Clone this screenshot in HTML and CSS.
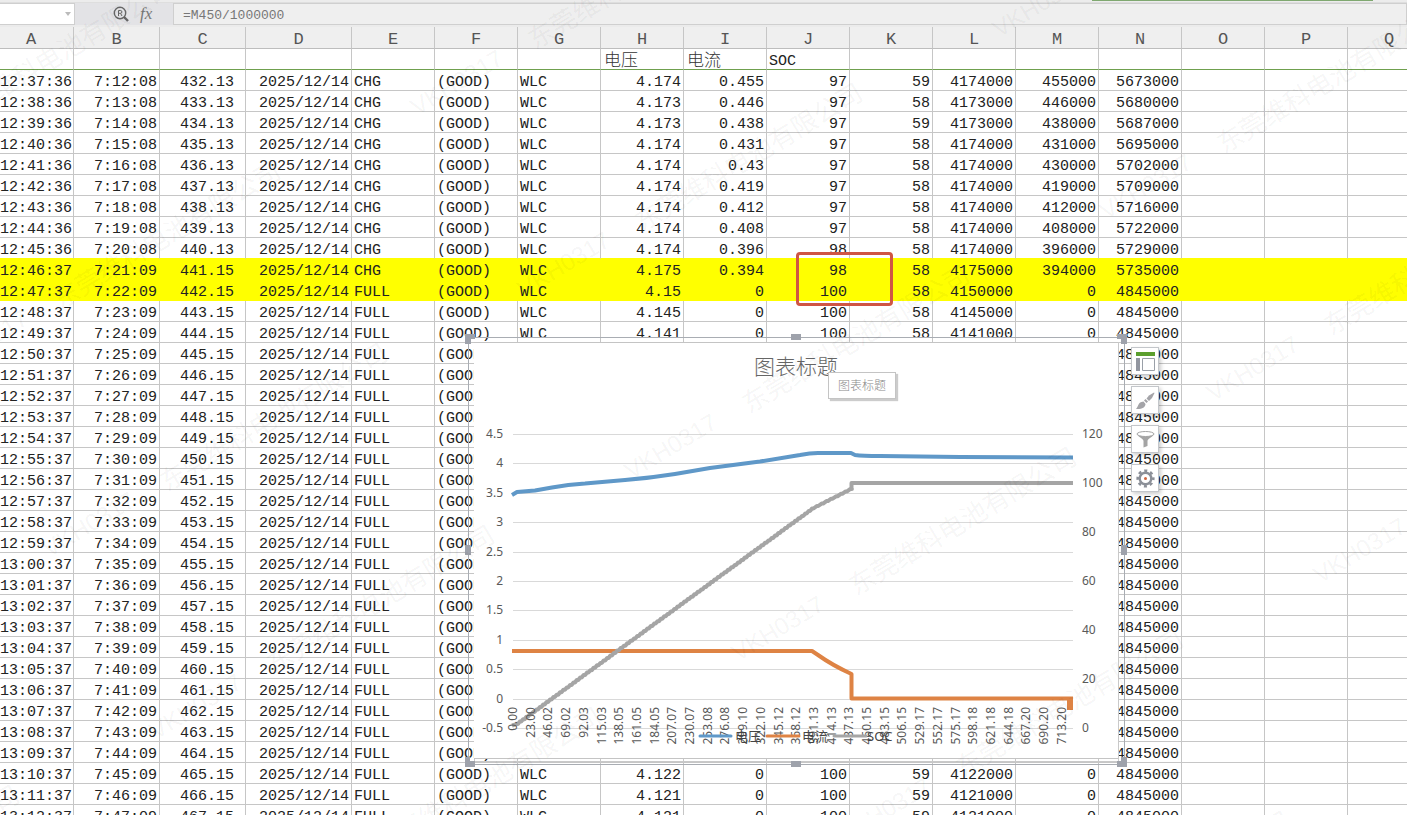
FILE: index.html
```
<!DOCTYPE html>
<html lang="zh-CN">
<head>
<meta charset="utf-8">
<title>Sheet</title>
<link rel="stylesheet" href="styles.css">
</head>
<body>
    <div class="ribbon-edge"><div class="ribbon-accent"></div></div>
    <div class="formula-bar">
        <div class="name-box">
            <input type="text" aria-label="Name box">
            <button aria-label="Show names"><svg width="6" height="4" viewBox="0 0 6 4"><path d="M0 0h6L3 4z" fill="#bbb"/></svg></button>
        </div>
        <div class="formula-tools">
            <button aria-label="Find">
                <svg width="16" height="16" viewBox="0 0 16 16" fill="none" stroke="#666">
                    <circle cx="7" cy="7" r="5.7" stroke-width="1.4"/>
                    <path d="M11 11l4 4" stroke-width="2.4"/>
                    <path d="M5.5 10V4.500h2a1.300 1.300 0 0 1 0 2.800h-2M7.500 7.300L9 10" stroke-width="1"/>
                </svg>
            </button>
            <button class="fx">fx</button>
        </div>
        <input class="formula" type="text" value="=M450/1000000" aria-label="Formula">
    </div>

    <div class="sheet">
        <table class="grid">
            <colgroup>
                <col class="col-a"><col class="col-b"><col class="col-b"><col class="col-d">
                <col span="13">
            </colgroup>
            <thead><tr id="letters"></tr></thead>
            <tbody id="rows">
                <tr class="titles">
                    <td></td><td></td><td></td><td></td><td></td><td></td><td></td>
                    <td>电压</td><td>电流</td><td>SOC</td>
                    <td></td><td></td><td></td><td></td><td></td><td></td><td></td>
                </tr>
            </tbody>
        </table>

        <div class="red-box"></div>

        <svg class="chart" width="670" height="444" viewBox="460 330 670 444">
            <path d="M468.500 337.500H1124.500V764.500H468.500z" fill="none" stroke="#a9adb3"/>
            <path d="M474.500 342.500H1118.500V761.500H474.500z" fill="none" stroke="#c9c9c9"/>
            <rect x="474" y="343" width="644" height="415" fill="#fff"/>
            <path d="M474 342.500H1118M474 758.500H1118" stroke="#c4c4c4"/>
            <g fill="#9ea2ab">
                <path d="M465 334h10v5h-4v5h-6zM1117 334h10v10h-6v-5h-4zM465 757h5v4h5v6h-10zM1121 757h6v10h-10v-6h4z"/>
                <rect x="791" y="334" width="10" height="6"/>
                <rect x="791" y="761" width="10" height="6"/>
                <rect x="465" y="545" width="6" height="10"/>
                <rect x="1121" y="545" width="6" height="10"/>
            </g>
            <text class="chart-title" x="796" y="374">图表标题</text>
            <g id="gridlines"></g>
            <g fill="none" stroke-width="4" stroke-linejoin="round">
                <path stroke="#5f98c8" d="M512 495L517 492L535 490.500L552 487.500Q568 484.500 585 483.500L625 480Q650 478 675 474L710 468L760 461.500L800 455Q810 453 818 453H851L855 455Q862 456 880 456L960 457L1073 457.500"/>
                <path stroke="#de8344" d="M512 651H812L818 655Q832 665 851.500 674V698.500H1073"/>
                <path stroke="#de8344" stroke-width="6" d="M1070 697v13"/>
                <path id="soc-line" stroke="#a5a5a5"/>
            </g>
            <g id="axis-labels" class="axis"></g>
            <g stroke-width="3" stroke-linecap="round">
                <path d="M700 736H731" stroke="#5f98c8"/>
                <path d="M767 736H799" stroke="#de8344"/>
                <path d="M834 736H866" stroke="#a5a5a5"/>
            </g>
            <g class="legend">
                <text x="735" y="741">电压</text>
                <text x="802" y="741">电流</text>
                <text x="867" y="741">SOC</text>
            </g>
        </svg>

        <div class="tooltip">图表标题</div>

        <div class="chart-tools">
            <button aria-label="Chart elements">
                <svg width="19" height="19" viewBox="0 0 19 19">
                    <path d="M0 0h19v4H0z" fill="#5b9f2e"/>
                    <path d="M0 6h4v13H0z" fill="#9296a0"/>
                    <path d="M6.500 6.500h12v12h-12z" fill="#fff" stroke="#9aa0a8"/>
                </svg>
            </button>
            <button aria-label="Chart styles">
                <svg width="19" height="19" viewBox="0 0 19 19" fill="#a4a4a8">
                    <path d="M18 1.500L13 4.500L10.500 7.500L13 10L16 7L18.500 2z"/>
                    <path d="M9.500 8L12 10.500L10.500 12L8 9.500z"/>
                    <path d="M7.500 10.500L9.500 13C9.500 16.500 5.500 18.500 0 18C2.500 16 1.500 11 7.500 10.500z"/>
                </svg>
            </button>
            <button aria-label="Chart filter">
                <svg width="19" height="19" viewBox="0 0 19 19">
                    <path d="M1 4C3 8 7.500 8.500 7.500 11V17.500L11.500 16V11C11.500 8.500 16 8 18 4z" fill="#a4a4a4"/>
                    <ellipse cx="9.500" cy="4" rx="8.500" ry="2.500" fill="#fff" stroke="#a4a4a4"/>
                </svg>
            </button>
            <button aria-label="Chart settings">
                <svg width="19" height="19" viewBox="0 0 19 19">
                    <circle cx="9.500" cy="9.500" r="5.800" fill="none" stroke="#8c9098" stroke-width="2.400"/>
                    <circle cx="9.500" cy="9.500" r="7.800" fill="none" stroke="#8c9098" stroke-width="2.600" stroke-dasharray="3 3.126" stroke-dashoffset="1.500"/>
                    <circle cx="9.500" cy="9.500" r="1.500" fill="#d0653f"/>
                </svg>
            </button>
        </div>
    </div>

    <svg class="watermark" id="watermark" aria-hidden="true"></svg>

<script src="script.js"></script>
</body>
</html>
```
FILE: styles.css
```
* {
    box-sizing: border-box;
}

body {
    margin: 0;
    height: 100vh;
    overflow: hidden;
    position: relative;
    display: flex;
    flex-direction: column;
    background-color: #fff;
    color: #222;
    font-family: "Liberation Mono", "Noto Sans CJK SC", monospace;
    font-size: 15px;
}

button {
    padding: 0;
    border: none;
    background: none;
    font: inherit;
    cursor: pointer;
}

input {
    font: inherit;
    outline: none;
}

.ribbon-edge {
    flex: none;
    height: 3px;
    background-color: #ececec;
    border-bottom: 1px solid #dedede;
}

.ribbon-accent {
    width: 20%;
    height: 1px;
    margin-left: 77.6%;
    background-color: #7fa870;
}

.formula-bar {
    flex: none;
    display: flex;
    height: 24px;
    padding-bottom: 2px;
    background-color: #ebebeb;
}

.name-box {
    display: flex;
    width: 75px;
    background-color: #fff;
    border: 1px solid #cfcfcf;
    border-left: none;
}

.name-box input {
    width: 62px;
    border: none;
}

.name-box button {
    display: flex;
    align-items: center;
    margin-left: 3px;
}

.formula-tools {
    display: flex;
    align-items: center;
    gap: 11px;
    width: 98px;
    padding-left: 38px;
    background-color: #e3e3e6;
}

.formula-tools button {
    display: flex;
}

.fx {
    color: #777;
    font-family: "Liberation Serif", serif;
    font-size: 17px;
    font-style: italic;
    line-height: 18px;
}

.formula {
    flex: 1;
    min-width: 0;
    padding: 2px 9px 0;
    border: 1px solid #cfcfcf;
    background-color: #efefef;
    color: #777;
    font-size: 13px;
}

.sheet {
    flex: 1;
    min-height: 0;
    position: relative;
    overflow: hidden;
}

.grid {
    width: 1431px;
    table-layout: fixed;
    border-collapse: separate;
    border-spacing: 0;
}

.grid col {
    width: 83px;
}

.grid .col-a {
    width: 74px;
}

.grid .col-b {
    width: 86px;
}

.grid .col-d {
    width: 106px;
}

.grid th {
    height: 22px;
    padding: 4px 0 0;
    border-right: 1px solid #c6c6c6;
    border-bottom: 1px solid #bdbdbd;
    background-color: #efefef;
    color: #555;
    font-size: 17px;
    font-weight: normal;
    line-height: 17px;
}

.grid th:first-child {
    padding-right: 11px;
}

.grid td {
    height: 21px;
    padding: 5px 2px 0;
    border-right: 1px solid #c6c6c6;
    border-bottom: 1px solid #c6c6c6;
    line-height: 15px;
    text-align: right;
    white-space: nowrap;
}

.grid .titles td {
    border-bottom-color: #6fa04e;
    text-align: left;
}

.grid .titles td:nth-child(8),
.grid .titles td:nth-child(9) {
    padding-left: 3px;
    color: #333;
    font-size: 17px;
    font-weight: 300;
}

.grid td:nth-child(1) {
    padding-left: 0;
}

.grid td:nth-child(3) {
    padding-right: 11px;
}

.grid td:nth-child(5),
.grid td:nth-child(6),
.grid td:nth-child(7) {
    text-align: left;
}

.grid .before-marked td {
    border-bottom-color: #ff0;
}

.grid .marked td {
    background-color: #ff0;
    border-color: #ff0;
}

.red-box {
    position: absolute;
    left: 796px;
    top: 225px;
    width: 97px;
    height: 54px;
    border: 3px solid #cf5644;
    border-radius: 4px;
}

.chart {
    position: absolute;
    left: 460px;
    top: 303px;
}

.chart-title {
    fill: #666;
    font-size: 21px;
    font-weight: 300;
    text-anchor: middle;
}

.axis {
    fill: #595959;
    font-family: "Noto Sans", sans-serif;
    font-size: 12px;
}

.axis .end {
    text-anchor: end;
}

.legend {
    fill: #444;
    font-family: "Noto Sans", "Noto Sans CJK SC", sans-serif;
    font-size: 13px;
}

.tooltip {
    position: absolute;
    left: 828px;
    top: 345px;
    padding: 5px 9px 2px;
    border: 1px solid #c4c4c4;
    background-color: #fff;
    box-shadow: 2px 2px 1px #ccc;
    color: #888;
    font-size: 12px;
    font-weight: 300;
    line-height: 18px;
}

.chart-tools {
    position: absolute;
    left: 1131px;
    top: 320px;
    display: flex;
    flex-direction: column;
    gap: 11px;
}

.chart-tools button {
    display: flex;
    align-items: center;
    justify-content: center;
    width: 28px;
    height: 28px;
    border: 1px solid #c3c6ca;
    background-color: #fff;
    box-shadow: 2px 2px 4px rgba(0, 0, 0, 0.2);
}

.watermark {
    position: absolute;
    left: 0;
    top: 0;
    width: 100%;
    height: 100%;
    pointer-events: none;
    fill: rgba(0, 0, 0, 0.05);
    font-family: "Liberation Sans", "Noto Sans CJK SC", sans-serif;
    font-size: 24px;
}

.watermark .company {
    font-size: 26px;
}
```
FILE: script.js
```
const svgNS = 'http://www.w3.org/2000/svg';

// log values: voltage, current, K, N
const charging = [
    [4.174, 0.455, 59, 5673], [4.173, 0.446, 58, 5680], [4.173, 0.438, 59, 5687],
    [4.174, 0.431, 58, 5695], [4.174, 0.43, 58, 5702], [4.174, 0.419, 58, 5709],
    [4.174, 0.412, 58, 5716], [4.174, 0.408, 58, 5722], [4.174, 0.396, 58, 5729],
    [4.175, 0.394, 58, 5735]
];
const fullVoltage = [
    4.15, 4.145, 4.141, 4.139, 4.137, 4.135, 4.134, 4.133, 4.132, 4.131, 4.13, 4.129, 4.128,
    4.127, 4.127, 4.126, 4.126, 4.125, 4.125, 4.124, 4.124, 4.123, 4.122, 4.122, 4.121, 4.121
];

function pad(n) {
    return String(n).padStart(2, '0');
}

function addRow(i, voltage, current, k, n) {
    const full = i >= charging.length;
    const late = i >= 9;
    const minute = 37 + i;
    const soc = full ? 100 : i < 8 ? 97 : 98;
    const values = [
        `${12 + Math.floor(minute / 60)}:${pad(minute % 60)}:${late ? 37 : 36}`,
        `7:${12 + i}:${late ? '09' : '08'}`,
        `${432 + i}.${late ? 15 : 13}`,
        '2025/12/14',
        full ? 'FULL' : 'CHG',
        '(GOOD)',
        'WLC',
        voltage,
        current,
        soc,
        k,
        Math.round(voltage * 1000) * 1000,
        Math.round(current * 1000) * 1000,
        n * 1000,
        '', '', ''
    ];
    const row = document.createElement('tr');
    if (i === 8) {
        row.className = 'before-marked';
    } else if (i === 9 || i === 10) {
        row.className = 'marked';
    }
    values.forEach(value => {
        const cell = document.createElement('td');
        cell.textContent = value;
        row.append(cell);
    });
    document.getElementById('rows').append(row);
}

'ABCDEFGHIJKLMNOPQ'.split('').forEach(letter => {
    const cell = document.createElement('th');
    cell.scope = 'col';
    cell.textContent = letter;
    document.getElementById('letters').append(cell);
});
charging.forEach((r, i) => addRow(i, r[0], r[1], r[2], r[3]));
fullVoltage.forEach((v, i) => addRow(i + 10, v, 0, i < 12 ? 58 : 59, 4845));

function addText(parent, text, x, y, className, rotate) {
    const el = document.createElementNS(svgNS, 'text');
    el.setAttribute('x', x);
    el.setAttribute('y', y);
    if (className) {
        el.setAttribute('class', className);
    }
    if (rotate) {
        el.setAttribute('transform', `rotate(${rotate} ${x} ${y})`);
    }
    el.textContent = text;
    parent.append(el);
}

const axis = document.getElementById('axis-labels');
for (let i = 0; i <= 10; i++) {
    const y = Math.round(434 + i * 29.4);
    const line = document.createElementNS(svgNS, 'path');
    line.setAttribute('d', `M513 ${y + 0.5}H1073`);
    line.setAttribute('stroke', '#d9d9d9');
    document.getElementById('gridlines').append(line);
    addText(axis, 4.5 - i * 0.5, 503, y + 4, 'end');
}
for (let i = 0; i <= 6; i++) {
    addText(axis, 120 - i * 20, 1082, 438 + i * 49);
}
[
    '0.00', '23.00', '46.02', '69.02', '92.03', '115.03', '138.05', '161.05', '184.05', '207.07', '230.07',
    '253.08', '276.08', '299.10', '322.10', '345.12', '368.12', '391.13', '414.13', '437.13', '460.15',
    '483.15', '506.15', '529.17', '552.17', '575.17', '598.18', '621.18', '644.18', '667.20', '690.20', '713.20'
].forEach((label, i) => addText(axis, label, Math.round(517 + i * 17.7), 707, 'end', -90));

// SOC rises one percent at a time, slower near the end, then jumps to 100
let soc = 'M512 725.5';
for (let v = 2; v <= 98; v++) {
    const x = v < 90 ? 513 + (v - 1) * 3.36 : 812 + (v - 90) * 4.8;
    soc += `L${x.toFixed(1)} ${(729 - v * 2.45).toFixed(1)}h1.5`;
}
document.getElementById('soc-line').setAttribute('d', soc + 'H851.500V483H1073');

const watermark = document.getElementById('watermark');
for (let n = -2; n <= 2; n++) {
    for (let m = -6; m <= 6; m++) {
        const x = 738 + m * 107 + n * 582;
        const y = 662 + m * 182 - n * 78;
        if (x < -400 || x > 1500 || y < -50 || y > 1100) {
            continue;
        }
        addText(watermark, 'VKH0317', x, y, '', -31);
        addText(watermark, '东莞维科电池有限公司', x + 118, y - 66, 'company', -31);
    }
}
```
